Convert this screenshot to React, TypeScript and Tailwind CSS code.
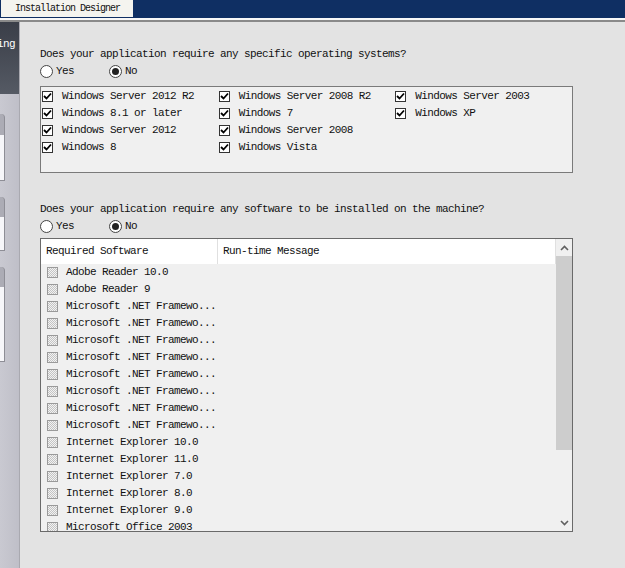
import React from "react";

const osColumns = [
  ["Windows Server 2012 R2", "Windows 8.1 or later", "Windows Server 2012", "Windows 8"],
  ["Windows Server 2008 R2", "Windows 7", "Windows Server 2008", "Windows Vista"],
  ["Windows Server 2003", "Windows XP"],
];

const software = [
  "Adobe Reader 10.0",
  "Adobe Reader 9",
  "Microsoft .NET Framewo...",
  "Microsoft .NET Framewo...",
  "Microsoft .NET Framewo...",
  "Microsoft .NET Framewo...",
  "Microsoft .NET Framewo...",
  "Microsoft .NET Framewo...",
  "Microsoft .NET Framewo...",
  "Microsoft .NET Framewo...",
  "Internet Explorer 10.0",
  "Internet Explorer 11.0",
  "Internet Explorer 7.0",
  "Internet Explorer 8.0",
  "Internet Explorer 9.0",
  "Microsoft Office 2003",
];

function CheckBox() {
  return (
    <span className="flex h-[11px] w-[11px] shrink-0 items-center justify-center border border-[#333] bg-white">
      <svg width="9" height="9" viewBox="0 0 9 9">
        <path d="M1 4 L3.5 6.5 L8 1.5" fill="none" stroke="#000" strokeWidth="1.8" />
      </svg>
    </span>
  );
}

function HatchBox() {
  return (
    <span className="h-[11px] w-[11px] shrink-0 border border-[#9a9a9a] bg-[repeating-conic-gradient(#c4c4c4_0_25%,#f2f2f2_0_50%)] bg-size-[2px_2px]" />
  );
}

function Radio({ checked, label }: { checked?: boolean; label: string }) {
  return (
    <div className="flex items-center gap-[3px]">
      <span className="flex h-[13px] w-[13px] items-center justify-center rounded-full border border-[#444] bg-white">
        {checked ? <span className="h-[7px] w-[7px] rounded-full bg-[#222]" /> : null}
      </span>
      <span>{label}</span>
    </div>
  );
}

function RadioRow() {
  return (
    <div className="flex h-[17px] items-center">
      <div className="w-[69px]">
        <Radio label="Yes" />
      </div>
      <Radio checked label="No" />
    </div>
  );
}

function Sidebar() {
  return (
    <div className="flex w-[20px] shrink-0 flex-col border-r border-[#a9a9b0] bg-[linear-gradient(to_right,#c9c9d1,#bfbfc8)]">
      <div className="h-[72px] overflow-hidden bg-[linear-gradient(to_bottom,#3a3e48,#555a64)] pt-[14px] text-[11px] leading-[17px] tracking-[-0.6px] text-white">
        <span className="-ml-[3px] whitespace-nowrap">ing</span>
      </div>
      <div className="mt-[20px] flex flex-col">
        {[
          [21, 46],
          [20, 34],
          [20, 75],
        ].map(([head, body], i) => (
          <div key={i} className={i === 0 ? "" : "mt-[16px]"}>
            <div className="w-[5px] rounded-tr-[4px] border-r border-[#8e8e96] bg-[#acacb5]" style={{ height: head }} />
            <div className="w-[5px] border-r border-b border-[#8e8e96] bg-[#f7f7fa]" style={{ height: body }} />
          </div>
        ))}
      </div>
    </div>
  );
}

function ScrollBar() {
  return (
    <div className="flex w-[16px] shrink-0 flex-col bg-[#f0f0f0]">
      <div className="flex h-[17px] items-center justify-center">
        <svg width="9" height="6" viewBox="0 0 9 6">
          <path d="M1 5 L4.5 1.5 L8 5" fill="none" stroke="#606060" strokeWidth="1.6" />
        </svg>
      </div>
      <div className="h-[194px] bg-[#cdcdcd]" />
      <div className="flex-1" />
      <div className="flex h-[17px] items-center justify-center">
        <svg width="9" height="6" viewBox="0 0 9 6">
          <path d="M1 1 L4.5 4.5 L8 1" fill="none" stroke="#606060" strokeWidth="1.6" />
        </svg>
      </div>
    </div>
  );
}

export default function App() {
  return (
    <div className="flex h-[568px] w-[625px] flex-col overflow-hidden bg-[#e3e3e3] font-['Liberation_Mono',monospace] text-[11px] tracking-[-0.6px] text-[#111]">
      <div className="flex h-[18px] shrink-0 bg-[#0f2f63]">
        <div className="ml-[1px] flex h-[17px] w-[132px] items-center bg-[#f4f4ef] pl-[14px] text-[10px] tracking-[-1px] text-[#111]">
          Installation Designer
        </div>
      </div>
      <div className="h-[2px] shrink-0 bg-[#f8f8f8]" />
      <div className="h-[2px] shrink-0 bg-[#8a8a8a]" />
      <div className="flex flex-1">
        <Sidebar />
        <div className="flex flex-1 flex-col pl-[20px] pt-[24px]">
          <div className="h-[17px] leading-[17px]">Does your application require any specific operating systems?</div>
          <RadioRow />
          <div className="mt-[6px] flex h-[87px] w-[533px] border border-[#7a7a7a] bg-[#f0f0f0] pt-[1px] pl-[1px]">
            {osColumns.map((col, i) => (
              <div key={i} className="flex w-[177px] flex-col">
                {col.map((name) => (
                  <div key={name} className="flex h-[17px] items-center gap-[9px]">
                    <CheckBox />
                    <span>{name}</span>
                  </div>
                ))}
              </div>
            ))}
          </div>
          <div className="mt-[28px] h-[17px] leading-[17px]">Does your application require any software to be installed on the machine?</div>
          <RadioRow />
          <div className="mt-[3px] flex h-[294px] w-[533px] overflow-hidden border border-[#6a6a6a] bg-[#f0f0f0]">
            <div className="flex flex-1 flex-col overflow-hidden">
              <div className="flex h-[25px] shrink-0 items-center border-r border-[#e0e0e0] bg-white">
                <div className="flex h-full w-[177px] items-center border-r border-[#e0e0e0] pl-[5px]">Required Software</div>
                <div className="pl-[5px]">Run-time Message</div>
              </div>
              {software.map((name, i) => (
                <div key={i} className="flex h-[17px] shrink-0 items-center gap-[8px] pl-[6px]">
                  <HatchBox />
                  <span>{name}</span>
                </div>
              ))}
            </div>
            <ScrollBar />
          </div>
        </div>
      </div>
    </div>
  );
}
